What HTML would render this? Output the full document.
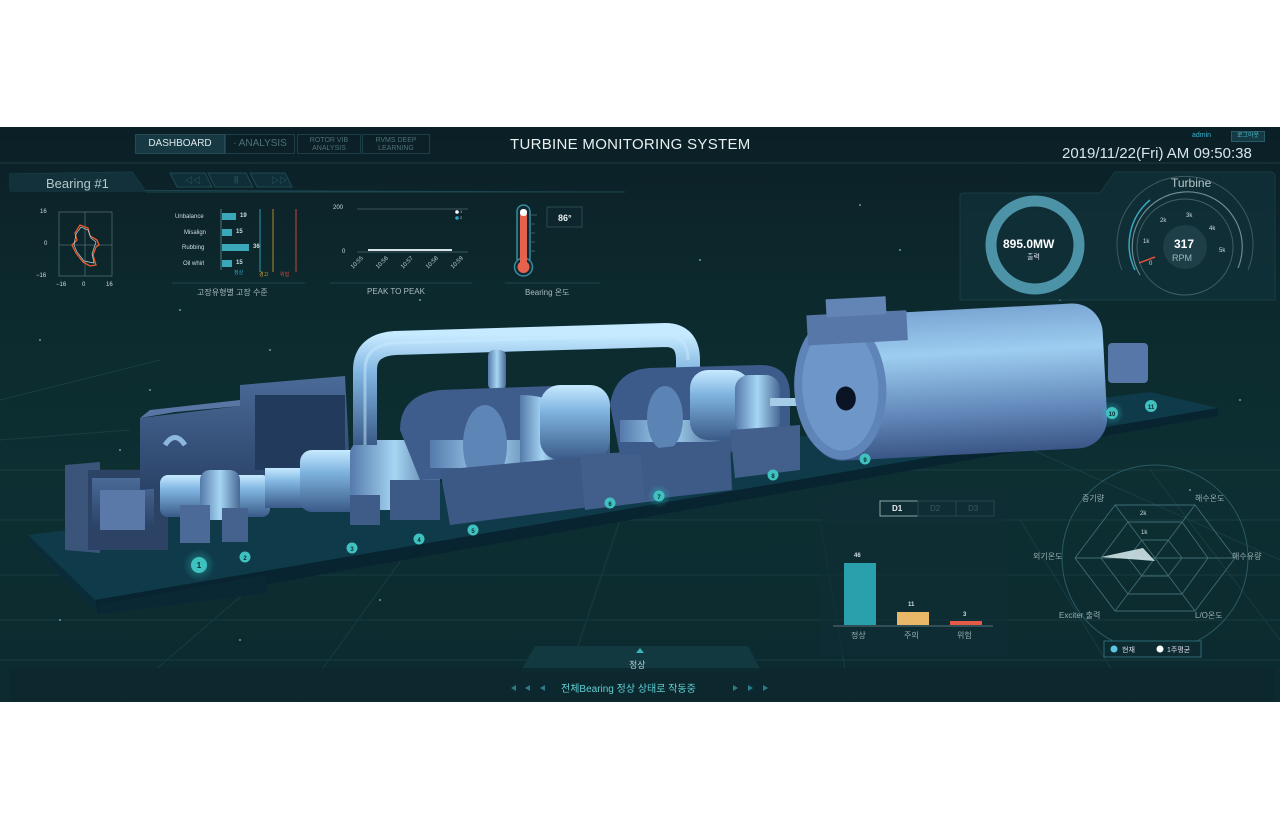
<!DOCTYPE html>
<html><head><meta charset="utf-8"><style>
*{margin:0;padding:0;box-sizing:border-box}
body{width:1280px;height:830px;background:#fff;position:relative;overflow:hidden;font-family:"Liberation Sans","Noto Sans CJK KR",sans-serif}
#dash{position:absolute;left:0;top:127px;width:1280px;height:575px;background:linear-gradient(180deg,#0b1f26 0%,#0c2a2e 30%,#0d2f32 60%,#0c2a2f 100%);overflow:hidden}
.a{position:absolute;white-space:nowrap}
.tab{position:absolute;top:7px;height:20px;border:1px solid #1f3f48;color:#4d7078;font-size:9px;text-align:center;line-height:8px}
.sm{font-size:6px;color:#cfdde0}
</style></head><body>
<div id="dash">
<svg width="1280" height="575" style="position:absolute;left:0;top:0" viewBox="0 127 1280 575">
<defs>
<linearGradient id="met" x1="0" y1="0" x2="0" y2="1"><stop offset="0" stop-color="#c6eaff"/><stop offset=".35" stop-color="#80b4e0"/><stop offset="1" stop-color="#3a5a88"/></linearGradient>
<linearGradient id="met2" x1="0" y1="0" x2="1" y2="0"><stop offset="0" stop-color="#557aab"/><stop offset=".5" stop-color="#a6d6f4"/><stop offset="1" stop-color="#486894"/></linearGradient>
<linearGradient id="drk" x1="0" y1="0" x2="0" y2="1"><stop offset="0" stop-color="#4a6a98"/><stop offset="1" stop-color="#2a4266"/></linearGradient>
<linearGradient id="gen" x1="0" y1="0" x2="0" y2="1"><stop offset="0" stop-color="#7aa6d4"/><stop offset=".3" stop-color="#9dcdf0"/><stop offset=".7" stop-color="#6389bb"/><stop offset="1" stop-color="#3a5686"/></linearGradient>
<radialGradient id="glow"><stop offset="0" stop-color="#2fc4c4" stop-opacity=".5"/><stop offset="1" stop-color="#2fc4c4" stop-opacity="0"/></radialGradient>
</defs>
<g stroke="#2c5a62" stroke-width="1" opacity=".35" fill="none">
<line x1="0" y1="470" x2="1280" y2="470"/><line x1="0" y1="520" x2="1280" y2="520"/><line x1="0" y1="575" x2="1280" y2="575"/><line x1="0" y1="620" x2="1280" y2="620"/><line x1="0" y1="660" x2="1280" y2="660"/>
<line x1="120" y1="700" x2="330" y2="520"/><line x1="300" y1="700" x2="430" y2="520"/><line x1="560" y1="700" x2="620" y2="520"/><line x1="850" y1="700" x2="820" y2="520"/><line x1="1130" y1="700" x2="1020" y2="520"/><line x1="1280" y1="640" x2="1150" y2="470"/><line x1="1010" y1="440" x2="1280" y2="560"/>
<line x1="0" y1="400" x2="160" y2="360"/><line x1="0" y1="440" x2="130" y2="430"/>
</g>
<g fill="#6a9aa0"><circle cx="40" cy="340" r="1"/><circle cx="180" cy="310" r="1"/><circle cx="270" cy="350" r="1"/><circle cx="150" cy="390" r="1"/><circle cx="120" cy="450" r="1"/><circle cx="420" cy="300" r="1"/><circle cx="700" cy="260" r="1"/><circle cx="860" cy="205" r="1"/><circle cx="900" cy="250" r="1"/><circle cx="1060" cy="300" r="1"/><circle cx="1240" cy="400" r="1"/><circle cx="60" cy="620" r="1"/><circle cx="240" cy="640" r="1"/><circle cx="380" cy="600" r="1"/><circle cx="1190" cy="490" r="1"/></g>
<polygon points="28,535 1150,392 1218,408 95,600" fill="#0f3a49"/>
<polygon points="95,600 1218,408 1218,416 98,614" fill="#082430"/>
<polygon points="28,535 95,600 98,614 30,545" fill="#0a2c38"/>
<polygon points="265,575 268,593 100,614 98,605" fill="#0a2834"/>
<polygon points="65,465 100,462 100,553 65,550" fill="#3a5579"/>
<rect x="88" y="470" width="80" height="80" fill="#2c4366"/>
<rect x="92" y="478" width="62" height="50" fill="url(#drk)"/>
<rect x="100" y="490" width="45" height="40" fill="#5a79a8"/>
<polygon points="140,490 140,418 240,406 240,385 345,376 350,470" fill="url(#drk)"/>
<polygon points="140,418 175,412 240,406 240,400 150,410" fill="#5875a3"/>
<rect x="255" y="395" width="90" height="75" fill="#223a5c"/>
<path d="M165 445 q10 -15 20 0" stroke="#8cb8e0" stroke-width="5" fill="none"/>
<rect x="160" y="475" width="110" height="42" rx="8" fill="url(#met)"/>
<rect x="200" y="470" width="40" height="50" rx="10" fill="url(#met2)"/>
<rect x="265" y="468" width="50" height="40" fill="url(#met)"/>
<rect x="300" y="450" width="80" height="62" rx="12" fill="url(#met)"/>
<rect x="350" y="440" width="90" height="70" rx="14" fill="url(#met2)"/>
<rect x="180" y="505" width="30" height="38" fill="#4c6a98"/>
<rect x="222" y="508" width="26" height="34" fill="#45628f"/>
<rect x="350" y="495" width="30" height="30" fill="#3f5c88"/>
<rect x="390" y="480" width="50" height="40" fill="#3d5a86"/>
<path d="M365 445 L365 370 Q365 345 395 343 L665 335 Q688 335 688 360 L688 400" stroke="url(#met)" stroke-width="24" fill="none"/>
<path d="M365 445 L365 370 Q365 345 395 343 L665 335 Q688 335 688 360" stroke="#c8ecff" stroke-width="3" fill="none" opacity=".5"/>
<rect x="488" y="350" width="18" height="40" rx="6" fill="url(#met2)"/>
<path d="M400 430 Q400 395 440 390 L580 385 Q610 385 610 420 L610 470 L420 480 Z" fill="#3e5c8c"/>
<rect x="430" y="440" width="120" height="28" fill="url(#met2)"/>
<ellipse cx="485" cy="445" rx="22" ry="40" fill="#5d86b6"/>
<path d="M520 395 Q560 395 565 420 L565 500 L520 500 Z" fill="url(#met2)"/>
<rect x="540" y="385" width="70" height="75" rx="20" fill="url(#met)"/>
<polygon points="440,470 600,455 605,505 450,525" fill="#3c5884"/>
<polygon points="580,455 660,450 662,500 585,510" fill="#425f8c"/>
<path d="M610 405 Q615 370 650 368 L760 365 Q790 365 790 395 L790 450 L620 455 Z" fill="#3c5a8a"/>
<rect x="620" y="420" width="100" height="22" fill="url(#met2)"/>
<ellipse cx="665" cy="418" rx="18" ry="32" fill="#5b84b4"/>
<rect x="690" y="370" width="60" height="70" rx="18" fill="url(#met)"/>
<rect x="735" y="375" width="45" height="60" rx="14" fill="url(#met2)"/>
<polygon points="640,450 730,440 732,490 645,500" fill="#3e5a87"/>
<polygon points="730,430 800,425 800,470 735,478" fill="#435f8c"/>
<rect x="770" y="398" width="60" height="8" fill="#a4cce8"/>
<g transform="rotate(-3 950 380)">
<rect x="810" y="310" width="295" height="145" rx="30" fill="url(#gen)"/>
<ellipse cx="840" cy="382" rx="46" ry="72" fill="#5f84b8"/>
<ellipse cx="840" cy="382" rx="38" ry="63" fill="#6f96c8"/>
<ellipse cx="845" cy="393" rx="10" ry="12" fill="#0a1424"/>
<rect x="810" y="308" width="100" height="30" fill="#5677a8"/>
<rect x="830" y="293" width="60" height="18" fill="#6285b6"/>
</g>
<rect x="1108" y="343" width="40" height="40" rx="4" fill="#5677a8"/>
<g font-family="Liberation Sans" font-size="8" font-weight="bold" fill="#0b2b30" text-anchor="middle">
<circle cx="199" cy="565" r="16" fill="url(#glow)"/><circle cx="199" cy="565" r="8" fill="#3fc1c0"/><text x="199" y="568">1</text>
<circle cx="245" cy="557" r="5.5" fill="#3fc1c0"/><text x="245" y="560" font-size="6">2</text>
<circle cx="352" cy="548" r="5.5" fill="#3fc1c0"/><text x="352" y="551" font-size="6">3</text>
<circle cx="419" cy="539" r="5.5" fill="#3fc1c0"/><text x="419" y="542" font-size="6">4</text>
<circle cx="473" cy="530" r="5.5" fill="#3fc1c0"/><text x="473" y="533" font-size="6">5</text>
<circle cx="610" cy="503" r="5.5" fill="#3fc1c0"/><text x="610" y="506" font-size="6">6</text>
<circle cx="659" cy="496" r="12" fill="url(#glow)"/><circle cx="659" cy="496" r="5.5" fill="#3fc1c0"/><text x="659" y="499" font-size="6">7</text>
<circle cx="773" cy="475" r="5.5" fill="#3fc1c0"/><text x="773" y="478" font-size="6">8</text>
<circle cx="865" cy="459" r="5.5" fill="#3fc1c0"/><text x="865" y="462" font-size="6">9</text>
<circle cx="1112" cy="413" r="12" fill="url(#glow)"/><circle cx="1112" cy="413" r="6" fill="#3fc1c0"/><text x="1112" y="416" font-size="6">10</text>
<circle cx="1151" cy="406" r="6" fill="#3fc1c0"/><text x="1151" y="409" font-size="6">11</text>
</g>
<line x1="0" y1="163" x2="1280" y2="163" stroke="#1d3c44"/>
<polygon points="10,190 10,174 132,172 146,192 625,192" fill="none" stroke="#1c4650"/>
<polygon points="10,174 132,172 146,192 10,192" fill="#12313a"/>
<g fill="#102e37" stroke="#1f4a55"><polygon points="170,173 205,173 212,187 177,187"/><polygon points="208,173 246,173 253,187 215,187"/><polygon points="250,173 285,173 292,187 257,187"/></g>
<rect x="59" y="212" width="53" height="64" fill="none" stroke="#4d6b72" stroke-width=".8"/>
<line x1="85" y1="212" x2="85" y2="276" stroke="#4d6b72" stroke-width=".8"/><line x1="59" y1="245" x2="112" y2="245" stroke="#4d6b72" stroke-width=".8"/>
<path d="M75 233 L80 225 L88 228 L90 236 L97 240 L99 245 L96 247 L93 255 L96 265 L90 266 L83 262 L76 253 L72 245 L77 240 Z" fill="none" stroke="#ee5a2a" stroke-width="1.3"/>
<path d="M76 234 L81 227 L88 230 L91 238 L96 242 L92 254 L94 263 L84 261 L77 252 L74 245 Z" fill="none" stroke="#b9d2db" stroke-width=".7"/>
<rect x="222" y="213" width="14" height="7" fill="#3aa8b8"/><rect x="222" y="229" width="10" height="7" fill="#3aa8b8"/><rect x="222" y="244" width="27" height="7" fill="#3aa8b8"/><rect x="222" y="260" width="10" height="7" fill="#3aa8b8"/>
<line x1="221" y1="209" x2="221" y2="270" stroke="#6b8a90" stroke-width=".8"/>
<line x1="260" y1="209" x2="260" y2="272" stroke="#2a9bb0"/><line x1="273" y1="209" x2="273" y2="272" stroke="#b08a2a"/><line x1="296" y1="209" x2="296" y2="272" stroke="#c9443a"/>
<line x1="172" y1="283" x2="305" y2="283" stroke="#1f4550"/><line x1="330" y1="283" x2="472" y2="283" stroke="#1f4550"/><line x1="505" y1="283" x2="600" y2="283" stroke="#1f4550"/>
<line x1="357" y1="209" x2="468" y2="209" stroke="#4b666c" stroke-width=".8"/><line x1="357" y1="252" x2="468" y2="252" stroke="#4b666c" stroke-width=".8"/>
<line x1="368" y1="250" x2="452" y2="250" stroke="#d8e3e6" stroke-width="2"/>
<circle cx="457" cy="212" r="1.8" fill="#fff"/><circle cx="457" cy="218" r="1.8" fill="#2aa6c8"/>
<rect x="517" y="205" width="13" height="60" rx="6.5" fill="#0e2a32" stroke="#3a8aa0" stroke-width="1.5"/>
<circle cx="523.5" cy="267" r="9" fill="#0e2a32" stroke="#3a8aa0" stroke-width="1.5"/>
<rect x="520" y="214" width="7" height="52" fill="#e5624c"/><rect x="520" y="209" width="7" height="7" rx="3" fill="#fff"/>
<circle cx="523.5" cy="267" r="6" fill="#e5624c"/>
<g stroke="#4b6a70" stroke-width=".8"><line x1="531" y1="215" x2="537" y2="215"/><line x1="531" y1="224" x2="535" y2="224"/><line x1="531" y1="233" x2="535" y2="233"/><line x1="531" y1="242" x2="535" y2="242"/><line x1="531" y1="251" x2="535" y2="251"/></g>
<rect x="547" y="207" width="35" height="20" fill="#0d252c" stroke="#2a4a52"/>
<path d="M960 300 L960 196 Q960 193 963 193 L1100 193 L1115 172 L1272 172 L1275 175 L1275 300 Z" fill="#11323a" opacity=".7" stroke="#1e4650"/>
<circle cx="1035" cy="245" r="44" fill="none" stroke="#4d93a8" stroke-width="11"/>
<circle cx="1185" cy="247" r="48" fill="none" stroke="#3f5f66" stroke-width="1"/>
<path d="M1140 275 A55 55 0 1 1 1238 268" fill="none" stroke="#6d8a90" stroke-width="1.2"/>
<path d="M1135 270 A58 58 0 0 1 1150 200" fill="none" stroke="#3aa6c0" stroke-width="1.5"/>
<circle cx="1185" cy="247" r="22" fill="#1f3f48"/>
<line x1="1139" y1="263" x2="1155" y2="257" stroke="#e0503c" stroke-width="1.5"/>
<path d="M1122 270 A68 68 0 1 1 1248 270" fill="none" stroke="#3b5a62" stroke-width="1"/>
<rect x="820" y="490" width="187" height="165" fill="#0f2e35" opacity=".7"/>
<rect x="880" y="501" width="38" height="15" fill="none" stroke="#8fa6aa"/><rect x="918" y="501" width="38" height="15" fill="none" stroke="#25454d"/><rect x="956" y="501" width="38" height="15" fill="none" stroke="#25454d"/>
<rect x="844" y="563" width="32" height="62" fill="#2aa0ad"/>
<rect x="897" y="612" width="32" height="13" fill="#e8b868"/>
<rect x="950" y="621" width="32" height="4" fill="#e45a48"/>
<line x1="833" y1="626" x2="993" y2="626" stroke="#557078"/>
<circle cx="1155" cy="558" r="93" fill="none" stroke="#2b5a64" stroke-width="1"/>
<g fill="none" stroke="#3f6c74" stroke-width=".9">
<polygon points="1115,505 1195,505 1235,558 1195,611 1115,611 1075,558"/>
<polygon points="1128,522 1182,522 1208,558 1182,594 1128,594 1101,558"/>
<polygon points="1142,540 1168,540 1182,558 1168,576 1142,576 1128,558"/>
<line x1="1115" y1="505" x2="1195" y2="611"/><line x1="1195" y1="505" x2="1115" y2="611"/><line x1="1075" y1="558" x2="1235" y2="558"/>
</g>
<polygon points="1101,557 1143,548 1155,561" fill="#cfe3e6" opacity=".9"/>
<rect x="1104" y="641" width="97" height="16" fill="#0d2a30" stroke="#2a6a74"/>
<circle cx="1114" cy="649" r="3.5" fill="#5bc6e0"/><circle cx="1160" cy="649" r="3.5" fill="#fff"/>
<polygon points="520,672 535,646 748,646 762,672" fill="#12393f"/>
<polygon points="636,653 640,648 644,653" fill="#3ab5b8"/>
<rect x="10" y="668" width="1265" height="33" fill="#0c272d" opacity=".8"/>
<g fill="#2a7c86"><polygon points="516,685 511,688 516,691"/><polygon points="530,685 525,688 530,691"/><polygon points="545,685 540,688 545,691"/><polygon points="733,685 738,688 733,691"/><polygon points="748,685 753,688 748,691"/><polygon points="763,685 768,688 763,691"/></g>
</svg>
<div class="tab" style="left:135px;width:90px;background:#163944;border-color:#254a55;color:#dbe7ea;font-size:10px;line-height:18px">DASHBOARD</div>
<div class="tab" style="left:225px;width:70px;line-height:18px;font-size:10px">· ANALYSIS</div>
<div class="tab" style="left:297px;width:64px;font-size:7px;padding-top:2px">ROTOR VIB<br>ANALYSIS</div>
<div class="tab" style="left:362px;width:68px;font-size:7px;padding-top:2px">RVMS DEEP<br>LEARNING</div>
<div class="a" style="left:510px;top:9px;font-size:15px;color:#e8f0f2;letter-spacing:.3px">TURBINE MONITORING SYSTEM</div>
<div class="a" style="left:1192px;top:5px;font-size:7px;color:#35b5d0">admin</div>
<div class="a" style="left:1231px;top:4px;width:34px;height:11px;border:1px solid #2a5a66;background:#153a44;font-size:6px;color:#4fc1d8;text-align:center;line-height:9px">로그아웃</div>
<div class="a" style="left:1062px;top:18px;font-size:15px;color:#d8e6ea">2019/11/22(Fri) AM 09:50:38</div>
<div class="a" style="left:46px;top:49px;font-size:13px;color:#b5c8cc">Bearing #1</div>
<div class="a" style="left:185px;top:48px;font-size:8px;color:#2c6a78">◁◁</div>
<div class="a" style="left:234px;top:48px;font-size:8px;color:#2c6a78">||</div>
<div class="a" style="left:271px;top:48px;font-size:8px;color:#2c6a78">▷▷</div>
<div class="a sm" style="left:40px;top:82px">16</div><div class="a sm" style="left:44px;top:114px">0</div><div class="a sm" style="left:36px;top:146px">−16</div>
<div class="a sm" style="left:56px;top:155px">−16</div><div class="a sm" style="left:82px;top:155px">0</div><div class="a sm" style="left:106px;top:155px">16</div>
<div class="a sm" style="left:175px;top:87px">Unbalance</div><div class="a sm" style="left:184px;top:103px">Misalign</div><div class="a sm" style="left:182px;top:118px">Rubbing</div><div class="a sm" style="left:183px;top:134px">Oil whirl</div>
<div class="a sm" style="left:240px;top:86px;font-weight:bold">19</div><div class="a sm" style="left:236px;top:102px;font-weight:bold">15</div><div class="a sm" style="left:253px;top:117px;font-weight:bold">36</div><div class="a sm" style="left:236px;top:133px;font-weight:bold">15</div>
<div class="a" style="left:234px;top:142px;font-size:5px;color:#2aa6c0">정상</div><div class="a" style="left:259px;top:144px;font-size:5px;color:#c9a23a">경고</div><div class="a" style="left:280px;top:144px;font-size:5px;color:#d4483a">위험</div>
<div class="a sm" style="left:333px;top:78px">200</div><div class="a sm" style="left:342px;top:122px">0</div>
<div class="a" style="left:460px;top:82px;font-size:4px;color:#ccc">1</div><div class="a" style="left:460px;top:88px;font-size:4px;color:#ccc">2</div>
<div class="a" style="left:350px;top:133px;font-size:6px;color:#bcc;transform:rotate(-45deg)">10:55</div>
<div class="a" style="left:375px;top:133px;font-size:6px;color:#bcc;transform:rotate(-45deg)">10:56</div>
<div class="a" style="left:400px;top:133px;font-size:6px;color:#bcc;transform:rotate(-45deg)">10:57</div>
<div class="a" style="left:425px;top:133px;font-size:6px;color:#bcc;transform:rotate(-45deg)">10:58</div>
<div class="a" style="left:450px;top:133px;font-size:6px;color:#bcc;transform:rotate(-45deg)">10:59</div>
<div class="a" style="left:558px;top:86px;font-size:9px;color:#e8eef0;font-weight:bold">86°</div>
<div class="a" style="left:197px;top:160px;font-size:8px;color:#a9bcc0">고장유형별 고장 수준</div>
<div class="a" style="left:367px;top:160px;font-size:8px;color:#a9bcc0">PEAK TO PEAK</div>
<div class="a" style="left:525px;top:160px;font-size:8px;color:#a9bcc0">Bearing 온도</div>
<div class="a" style="left:1171px;top:49px;font-size:12px;color:#b5c8cc">Turbine</div>
<div class="a" style="left:1003px;top:110px;font-size:12px;color:#fff;font-weight:bold">895.0MW</div>
<div class="a" style="left:1027px;top:125px;font-size:7px;color:#dde">출력</div>
<div class="a" style="left:1174px;top:110px;font-size:12px;color:#fff;font-weight:bold">317</div>
<div class="a" style="left:1172px;top:126px;font-size:9px;color:#9fb8be">RPM</div>
<div class="a sm" style="left:1160px;top:91px">2k</div><div class="a sm" style="left:1186px;top:86px">3k</div><div class="a sm" style="left:1209px;top:99px">4k</div><div class="a sm" style="left:1219px;top:121px">5k</div><div class="a sm" style="left:1143px;top:112px">1k</div><div class="a sm" style="left:1149px;top:134px">0</div>
<div class="a" style="left:892px;top:377px;font-size:8px;color:#eee;font-weight:bold">D1</div><div class="a" style="left:930px;top:377px;font-size:8px;color:#3f5a60">D2</div><div class="a" style="left:968px;top:377px;font-size:8px;color:#3f5a60">D3</div>
<div class="a sm" style="left:854px;top:426px;font-weight:bold">46</div><div class="a sm" style="left:908px;top:475px;font-weight:bold">11</div><div class="a sm" style="left:963px;top:485px;font-weight:bold">3</div>
<div class="a" style="left:851px;top:503px;font-size:8px;color:#9ab0b4">정상</div><div class="a" style="left:904px;top:503px;font-size:8px;color:#9ab0b4">주의</div><div class="a" style="left:957px;top:503px;font-size:8px;color:#9ab0b4">위험</div>
<div class="a" style="left:1082px;top:366px;font-size:8px;color:#9ab0b4">증기량</div>
<div class="a" style="left:1195px;top:366px;font-size:8px;color:#9ab0b4">해수온도</div>
<div class="a" style="left:1232px;top:424px;font-size:8px;color:#9ab0b4">해수유량</div>
<div class="a" style="left:1033px;top:424px;font-size:8px;color:#9ab0b4">외기온도</div>
<div class="a" style="left:1059px;top:483px;font-size:8px;color:#9ab0b4">Exciter 출력</div>
<div class="a" style="left:1195px;top:483px;font-size:8px;color:#9ab0b4">L/O온도</div>
<div class="a sm" style="left:1140px;top:384px">2k</div><div class="a sm" style="left:1141px;top:403px">1k</div>
<div class="a" style="left:1122px;top:518px;font-size:7px;color:#dde">현재</div><div class="a" style="left:1167px;top:518px;font-size:7px;color:#dde">1주평균</div>
<div class="a" style="left:629px;top:531px;font-size:9px;color:#b4cdd0">정상</div>
<div class="a" style="left:561px;top:553px;font-size:10px;color:#5fd0d4">전체Bearing 정상 상태로 작동중</div>
</div>
</body></html>
